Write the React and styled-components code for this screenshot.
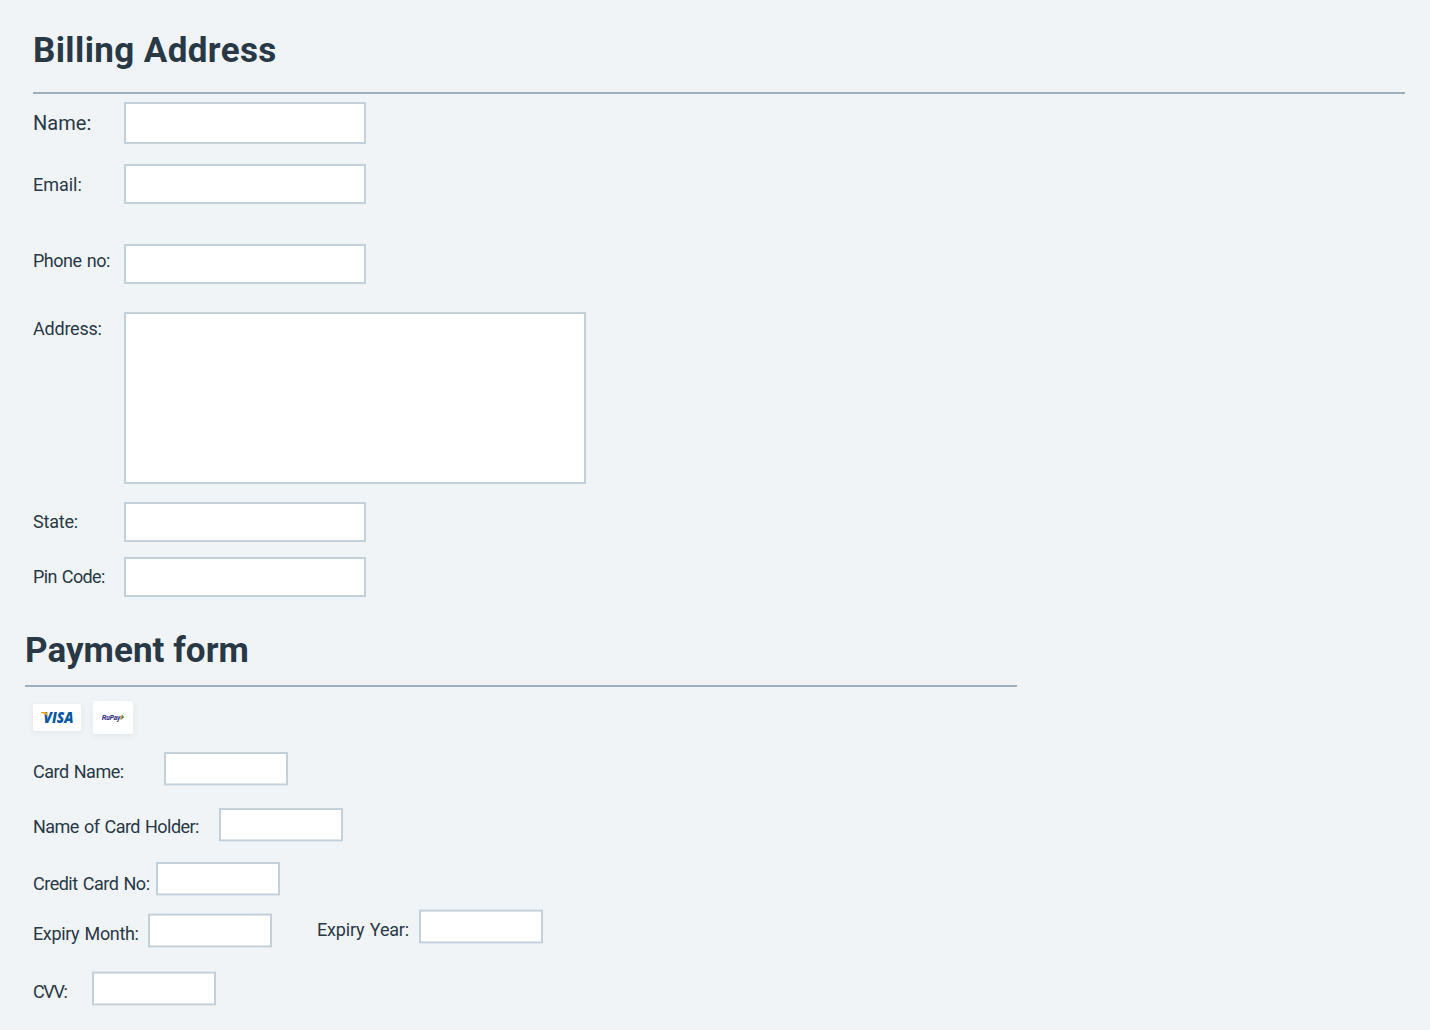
import React from 'react';
import styled, { createGlobalStyle } from 'styled-components';

const GlobalStyle = createGlobalStyle`
  *, *::before, *::after { box-sizing: border-box; }
  body {
    margin: 0;
    background: #f0f4f7;
    color: #293845;
    font-family: Roboto, "Liberation Sans", sans-serif;
  }
`;

const Page = styled.main`
  display: flex;
  flex-direction: column;
  height: 1030px;
  padding: 31px 25px 0;
  overflow: hidden;
`;

const BillingSection = styled.section`
  height: 600px;
  padding-left: 8px;
`;

const PaymentSection = styled.section`
  width: 992px;
`;

const Heading = styled.h1`
  margin: 0;
  padding-bottom: ${p => p.$gap}px;
  border-bottom: 2px solid #9eafbe;
  font-size: 35px;
  font-weight: 700;
  line-height: 40px;
  letter-spacing: ${p => p.$spacing}px;
`;

const Fields = styled.div`
  display: flex;
  flex-direction: column;
  padding: ${p => p.$padding};
`;

const Row = styled.div`
  display: flex;
  align-items: flex-start;
  height: ${p => p.$height}px;
`;

const Label = styled.label`
  flex: none;
  width: ${p => p.$width || 91}px;
  margin-left: ${p => p.$indent || 0}px;
  padding-top: ${p => p.$drop}px;
  font-size: ${p => p.$size || 18}px;
  line-height: 24px;
  letter-spacing: ${p => p.$spacing}px;
  word-spacing: 1.2px;
  white-space: nowrap;
`;

const Input = styled.input`
  display: block;
  flex: none;
  width: 242px;
  height: ${p => p.$height || 40}px;
  margin: 0;
  padding: 0 8px;
  border: 2px solid #c3cfd9;
  border-radius: 0;
  background: #fff;
  font: inherit;
  outline: none;
`;

const AddressBox = styled.textarea`
  display: block;
  flex: none;
  width: 462px;
  height: 172px;
  margin: 0;
  padding: 8px;
  border: 2px solid #c3cfd9;
  border-radius: 0;
  background: #fff;
  font: inherit;
  resize: none;
  outline: none;
`;

const softBottom = '0 1px 0 #dfe6ec, inset 0 -1px 0 #e0e7ec';
const softTop = '0 -1px 0 #dfe6ec, inset 0 1px 0 #dbe2e9';

const CardInput = styled(Input)`
  width: 124px;
  height: 33px;
  margin-top: ${p => p.$drop || 0}px;
  border-width: ${p => (p.$soft ? '1px 2px' : '2px 2px 1px')};
  box-shadow: ${p => (p.$soft ? `${softTop}, ${softBottom}` : softBottom)};
`;

const Brands = styled.div`
  display: flex;
  align-items: center;
  gap: 12px;
  height: 33px;
  margin: 14px 0 0 8px;
`;

const Brand = styled.div`
  width: ${p => p.$width}px;
  height: ${p => p.$height}px;
  border-radius: 2px;
  background: #fff;
  box-shadow: 0 2px 6px rgba(41, 56, 69, 0.07);

  svg { display: block; }
`;

const Visa = () => (
  <svg width="48" height="27" viewBox="0 0 48 27" role="img" aria-label="Visa">
    <text x="10.5" y="19" fill="#0757a0" fontFamily="Open Sans" fontSize="15" fontStyle="italic"
      fontWeight="800" textLength="30" lengthAdjust="spacingAndGlyphs">VISA</text>
    <path d="M8 8H12.4Q13.7 8 14 9.2L14.7 13Q12.9 9.8 8 8.8Z" fill="#f5a11c" />
  </svg>
);

const RuPay = () => (
  <svg width="40" height="33" viewBox="0 0 40 33" role="img" aria-label="RuPay">
    <text x="9" y="18.6" fill="#29247c" stroke="#29247c" strokeWidth="0.15" fontFamily="Liberation Sans"
      fontSize="6.8" fontStyle="italic" fontWeight="700" textLength="18.3"
      lengthAdjust="spacingAndGlyphs">RuPay</text>
    <path d="M29.2 13.8L31 16.2L27.9 19Z" fill="#16854a" />
    <path d="M28.2 13.8L29.7 16.2L26.9 19Z" fill="#f58220" />
  </svg>
);

export default function App() {
  return (
    <>
      <GlobalStyle />
      <Page>
        <BillingSection>
          <Heading $gap={21} $spacing={0.38}>Billing Address</Heading>
          <Fields $padding="8px 0 0">
            <Row $height={62}>
              <Label htmlFor="name" $size={20} $drop={9} $spacing={0.04}>Name:</Label>
              <Input id="name" $height={42} />
            </Row>
            <Row $height={80}>
              <Label htmlFor="email" $drop={9} $spacing={-0.02}>Email:</Label>
              <Input id="email" />
            </Row>
            <Row $height={68}>
              <Label htmlFor="phone" $drop={5} $spacing={-0.5}>Phone no:</Label>
              <Input id="phone" />
            </Row>
            <Row $height={190}>
              <Label htmlFor="address" $drop={5} $spacing={-0.22}>Address:</Label>
              <AddressBox id="address" />
            </Row>
            <Row $height={55}>
              <Label htmlFor="state" $drop={8} $spacing={-0.22}>State:</Label>
              <Input id="state" />
            </Row>
            <Row $height={40}>
              <Label htmlFor="pin" $drop={8} $spacing={-0.63}>Pin Code:</Label>
              <Input id="pin" />
            </Row>
          </Fields>
        </BillingSection>

        <PaymentSection>
          <Heading $gap={14} $spacing={0.05}>Payment form</Heading>
          <Brands>
            <Brand $width={48} $height={27}><Visa /></Brand>
            <Brand $width={40} $height={33}><RuPay /></Brand>
          </Brands>
          <Fields $padding="18px 0 0 8px">
            <Row $height={56}>
              <Label htmlFor="card" $width={131} $drop={8} $spacing={-0.5}>Card Name:</Label>
              <CardInput id="card" />
            </Row>
            <Row $height={54}>
              <Label htmlFor="holder" $width={186} $drop={7} $spacing={-0.54}>Name of Card Holder:</Label>
              <CardInput id="holder" />
            </Row>
            <Row $height={48}>
              <Label htmlFor="number" $width={123} $drop={10} $spacing={-0.5}>Credit Card No:</Label>
              <CardInput id="number" />
            </Row>
            <Row $height={62}>
              <Label htmlFor="month" $width={115} $drop={12} $spacing={-0.36}>Expiry Month:</Label>
              <CardInput id="month" $drop={4} $soft />
              <Label htmlFor="year" $width={102} $indent={45} $drop={8} $spacing={-0.18}>Expiry Year:</Label>
              <CardInput id="year" $soft />
            </Row>
            <Row $height={33}>
              <Label htmlFor="cvv" $width={59} $drop={8} $spacing={-1.35}>CVV:</Label>
              <CardInput id="cvv" $soft />
            </Row>
          </Fields>
        </PaymentSection>
      </Page>
    </>
  );
}
